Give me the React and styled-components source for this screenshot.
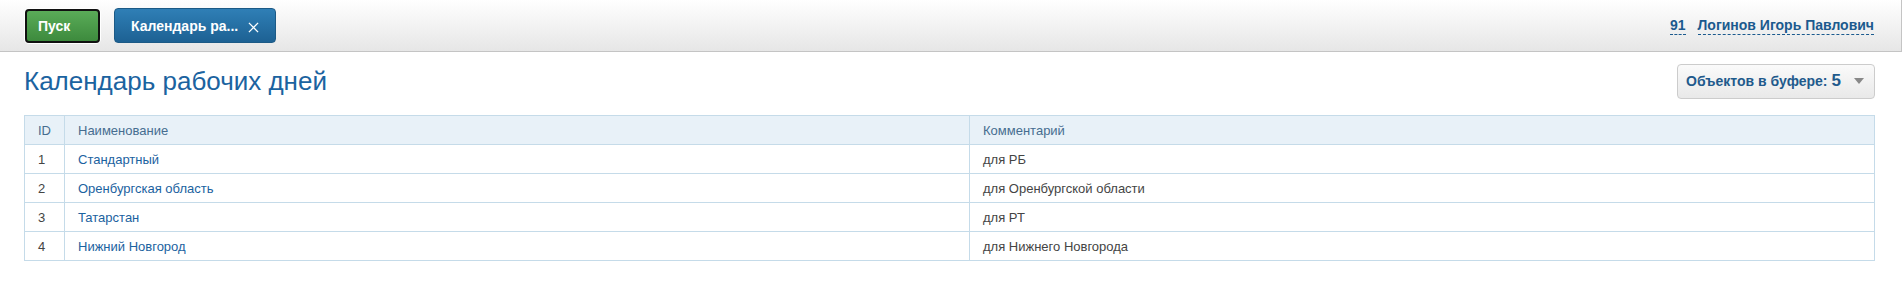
import React from "react";
import styled, { createGlobalStyle } from "styled-components";

const GlobalStyle = createGlobalStyle`
  body {
    margin: 0;
    background: #fff;
    font-family: "Liberation Sans", Arial, sans-serif;
  }
`;

const rows = [
  { id: 1, name: "Стандартный", comment: "для РБ" },
  { id: 2, name: "Оренбургская область", comment: "для Оренбургской области" },
  { id: 3, name: "Татарстан", comment: "для РТ" },
  { id: 4, name: "Нижний Новгород", comment: "для Нижнего Новгорода" },
];

const App = () => {
  return (
    <>
      <GlobalStyle />
      <TopBar>
        <StartButton>Пуск</StartButton>
        <TaskTab>
          <span>Календарь ра...</span>
          <CloseIcon viewBox="0 0 12 12">
            <path d="M1 1 L11 11 M11 1 L1 11" stroke="#fff" strokeWidth="1.4" />
          </CloseIcon>
        </TaskTab>
        <UserBlock>
          <UserLink>91</UserLink>
          <UserLink>Логинов Игорь Павлович</UserLink>
        </UserBlock>
      </TopBar>
      <Content>
        <TitleRow>
          <Title>Календарь рабочих дней</Title>
          <BufferButton>
            <span>
              Объектов в буфере: <Count>5</Count>
            </span>
            <Caret />
          </BufferButton>
        </TitleRow>
        <Table>
          <colgroup>
            <col style={{ width: 40 }} />
            <col />
            <col />
          </colgroup>
          <thead>
            <tr>
              <Th>ID</Th>
              <Th>Наименование</Th>
              <Th>Комментарий</Th>
            </tr>
          </thead>
          <tbody>
            {rows.map((r) => (
              <tr key={r.id}>
                <Td>{r.id}</Td>
                <Td>
                  <RowLink>{r.name}</RowLink>
                </Td>
                <Td>{r.comment}</Td>
              </tr>
            ))}
          </tbody>
        </Table>
      </Content>
    </>
  );
};

const TopBar = styled.div`
  height: 51px;
  display: flex;
  align-items: center;
  padding: 0 27px 0 25px;
  background: linear-gradient(#ffffff, #e6e6e6);
  border-bottom: 1px solid #c4c4c4;
  border-right: 1px solid #c4c4c4;
  box-sizing: content-box;
`;

const StartButton = styled.div`
  box-sizing: border-box;
  width: 75px;
  height: 34px;
  display: flex;
  align-items: center;
  padding-left: 11px;
  border: 2px solid #111;
  border-radius: 4px;
  background: linear-gradient(#5aac58, #3d8a3d);
  color: #fff;
  font-weight: bold;
  font-size: 14px;
  box-shadow: 0 0 0 1px #fff;
`;

const TaskTab = styled.div`
  box-sizing: border-box;
  margin-left: 14px;
  width: 162px;
  height: 35px;
  display: flex;
  align-items: center;
  gap: 10px;
  padding-left: 16px;
  border: 1px solid #1c5a86;
  border-radius: 4px;
  background: linear-gradient(#2f7fb6, #1d6193);
  color: #fff;
  font-weight: bold;
  font-size: 14px;
`;

const CloseIcon = styled.svg`
  width: 11px;
  height: 11px;
  margin-top: 3px;
`;

const UserBlock = styled.div`
  margin-left: auto;
  display: flex;
  gap: 12px;
`;

const UserLink = styled.span`
  color: #1b5a8e;
  font-weight: bold;
  font-size: 14px;
  border-bottom: 1px dashed #1b5a8e;
  line-height: 17px;
`;

const Content = styled.div`
  padding: 0 27px 0 24px;
`;

const TitleRow = styled.div`
  display: flex;
  justify-content: space-between;
  align-items: center;
  height: 52px;
  margin-top: 3px;
  margin-bottom: 8px;
`;

const Title = styled.h1`
  margin: 0;
  font-weight: normal;
  font-size: 26px;
  color: #1b63a0;
`;

const BufferButton = styled.div`
  box-sizing: border-box;
  width: 198px;
  height: 35px;
  display: flex;
  align-items: center;
  justify-content: space-between;
  padding: 0 10px 0 8px;
  border: 1px solid #cccccc;
  border-radius: 4px;
  background: linear-gradient(#fafafa, #e9e9e9);
  color: #1f5a8c;
  font-weight: bold;
  font-size: 14px;
`;

const Count = styled.span`
  font-size: 17px;
`;

const Caret = styled.span`
  width: 0;
  height: 0;
  border-left: 5px solid transparent;
  border-right: 5px solid transparent;
  border-top: 6px solid #888;
`;

const Table = styled.table`
  width: 100%;
  border-collapse: collapse;
  table-layout: fixed;
  font-size: 13px;
`;

const Th = styled.th`
  height: 28px;
  padding: 0 13px;
  text-align: left;
  font-weight: normal;
  color: #466d90;
  background: #e8f1f8;
  border: 1px solid #c5dbe9;
`;

const Td = styled.td`
  height: 28px;
  padding: 0 13px;
  color: #444;
  border: 1px solid #c5dbe9;
`;

const RowLink = styled.span`
  color: #1b62a0;
`;

export default App;
